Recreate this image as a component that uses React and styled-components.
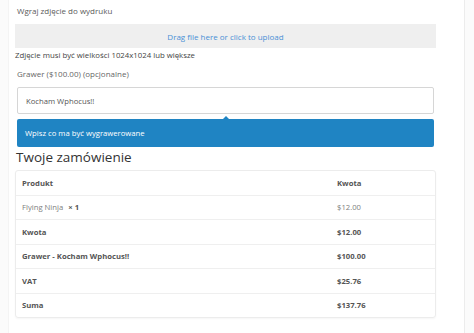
import styled, { createGlobalStyle } from "styled-components";

const GlobalStyle = createGlobalStyle`
    body {
        margin: 0;
        background: #fbfbfb;
        font-family: "Open Sans", "Liberation Sans", sans-serif;
    }
`;

export default function App() {
    const rows = [
        { label: "Grawer - Kocham Wphocus!!", value: "$100.00" },
        { label: "VAT", value: "$25.76" },
        { label: "Suma", value: "$137.76" },
    ];

    return (
        <>
            <GlobalStyle />
            <Page>
                <Field>
                    <Label>Wgraj zdjęcie do wydruku</Label>
                    <Dropzone>Drag file here or click to upload</Dropzone>
                    <Note>Zdjęcie musi być wielkości 1024x1024 lub większe</Note>
                </Field>

                <Field>
                    <Label $muted>Grawer ($100.00) (opcjonalne)</Label>
                    <Input defaultValue="Kocham Wphocus!!" />
                    <Tooltip>Wpisz co ma być wygrawerowane</Tooltip>
                </Field>

                <Heading>Twoje zamówienie</Heading>

                <Table>
                    <thead>
                        <tr>
                            <Th>Produkt</Th>
                            <Th>Kwota</Th>
                        </tr>
                    </thead>
                    <tbody>
                        <tr>
                            <Td>
                                Flying Ninja <Qty>× 1</Qty>
                            </Td>
                            <Td>$12.00</Td>
                        </tr>
                        <tr>
                            <Td $bold>Kwota</Td>
                            <Td $bold>$12.00</Td>
                        </tr>
                        {rows.map((r) => (
                            <tr key={r.label}>
                                <Td $bold>{r.label}</Td>
                                <Td $bold>{r.value}</Td>
                            </tr>
                        ))}
                    </tbody>
                </Table>
            </Page>
        </>
    );
}

const Page = styled.div`
    margin-left: 8px;
    width: 457px;
    min-height: 333px;
    box-sizing: border-box;
    background: #fff;
    border-left: 1px solid #f4f4f4;
    border-right: 1px solid #ececec;
    padding: 4px 0 0 6px;
`;

const Field = styled.div`
    width: 421px;
    display: flex;
    flex-direction: column;
`;

const Label = styled.div`
    font-size: 8px;
    line-height: 14px;
    color: ${(p) => (p.$muted ? "#666" : "#5a5a5a")};
    padding-left: 2px;
    margin-bottom: ${(p) => (p.$muted ? "6px" : "6px")};
`;

const Dropzone = styled.div`
    height: 24px;
    background: #efefef;
    color: #4a8fd6;
    font-size: 8px;
    display: flex;
    align-items: center;
    justify-content: center;
`;

const Note = styled.div`
    font-size: 7.8px;
    line-height: 14px;
    color: #444;
    margin: 0 0 5px;
`;

const Input = styled.input`
    margin: 0 2px;
    height: 27px;
    box-sizing: border-box;
    border: 1px solid #d6d6d6;
    border-radius: 2px;
    padding: 0 8px;
    font-family: inherit;
    font-size: 7.7px;
    color: #555;
    outline: none;
`;

const Tooltip = styled.div`
    position: relative;
    margin: 5px 2px 0;
    height: 28px;
    background: #1f84c3;
    border-radius: 2px;
    color: #fff;
    font-size: 7.7px;
    display: flex;
    align-items: center;
    padding-left: 8px;

    &::before {
        content: "";
        position: absolute;
        top: -3px;
        left: 206px;
        border-left: 3px solid transparent;
        border-right: 3px solid transparent;
        border-bottom: 3px solid #1f84c3;
    }
`;

const Heading = styled.h2`
    margin: 2px 0 0;
    font-weight: 400;
    font-size: 13.5px;
    line-height: 16px;
    color: #333;
    padding-left: 1px;
`;

const Table = styled.table`
    margin-top: 5px;
    width: 421px;
    border-collapse: separate;
    border-spacing: 0;
    border: 1px solid #ececec;
    border-radius: 3px;
    box-shadow: 0 1px 2px rgba(0, 0, 0, 0.04);
    font-size: 7.7px;
`;

const Th = styled.th`
    text-align: left;
    font-weight: 700;
    color: #555;
    height: 23.5px;
    padding: 0 0 0 6px;
    border-bottom: 1px solid #efefef;
    &:last-child {
        width: 98px;
    }
`;

const Td = styled.td`
    height: 23.5px;
    padding: 0 0 0 6px;
    color: ${(p) => (p.$bold ? "#555" : "#808080")};
    font-weight: ${(p) => (p.$bold ? 700 : 400)};
    tr:not(:last-child) > & {
        border-bottom: 1px solid #efefef;
    }
`;

const Qty = styled.strong`
    color: #555;
    margin-left: 3px;
`;
